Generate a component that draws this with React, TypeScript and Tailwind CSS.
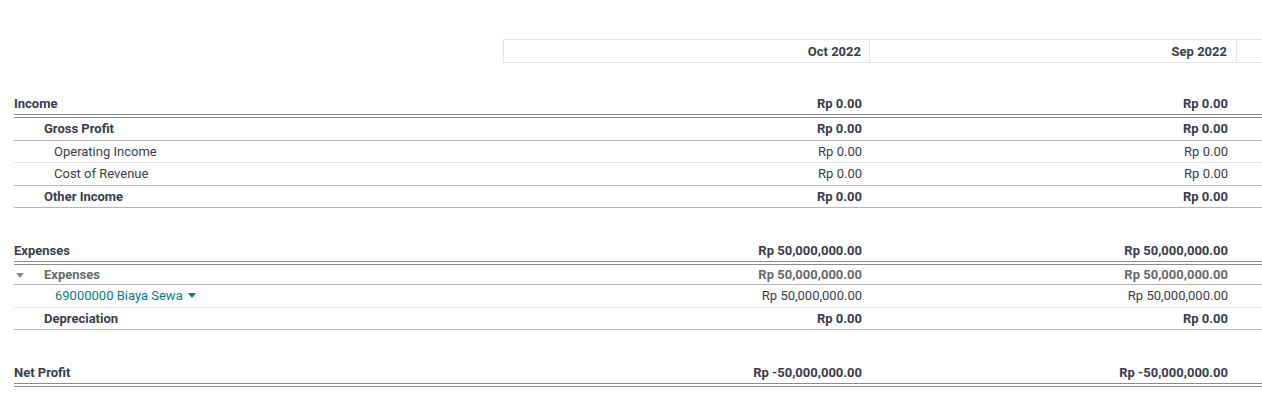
import React from "react";

type Row = {
  label: string;
  oct: string;
  sep: string;
  level: 0 | 1 | 2;
  bold?: boolean;
  muted?: boolean;
  link?: boolean;
  caret?: boolean;
  line: "double" | "dark" | "light";
};

const sections: Row[][] = [
  [
    { label: "Income", oct: "Rp 0.00", sep: "Rp 0.00", level: 0, bold: true, line: "double" },
    { label: "Gross Profit", oct: "Rp 0.00", sep: "Rp 0.00", level: 1, bold: true, line: "dark" },
    { label: "Operating Income", oct: "Rp 0.00", sep: "Rp 0.00", level: 2, line: "light" },
    { label: "Cost of Revenue", oct: "Rp 0.00", sep: "Rp 0.00", level: 2, line: "dark" },
    { label: "Other Income", oct: "Rp 0.00", sep: "Rp 0.00", level: 1, bold: true, line: "dark" },
  ],
  [
    { label: "Expenses", oct: "Rp 50,000,000.00", sep: "Rp 50,000,000.00", level: 0, bold: true, line: "double" },
    { label: "Expenses", oct: "Rp 50,000,000.00", sep: "Rp 50,000,000.00", level: 1, bold: true, muted: true, caret: true, line: "dark" },
    { label: "69000000 Biaya Sewa", oct: "Rp 50,000,000.00", sep: "Rp 50,000,000.00", level: 2, link: true, line: "light" },
    { label: "Depreciation", oct: "Rp 0.00", sep: "Rp 0.00", level: 1, bold: true, line: "dark" },
  ],
  [
    { label: "Net Profit", oct: "Rp -50,000,000.00", sep: "Rp -50,000,000.00", level: 0, bold: true, line: "double" },
  ],
];

const Caret = ({ className }: { className?: string }) => (
  <svg width="8" height="5" viewBox="0 0 8 5" className={className}>
    <path d="M0 0h8L4 5z" fill="currentColor" />
  </svg>
);

const ReportRow = ({ row }: { row: Row }) => {
  const lineCls =
    row.line === "double"
      ? "h-[26px] border-b-4 border-double border-[#8c8c8c]"
      : row.line === "dark"
      ? "border-b border-[#b5b5b5]"
      : "border-b border-[#e6e6e6]";
  const height = row.line === "double" ? "" : row.caret ? "h-[20px]" : "h-[22.5px]";
  const pad = row.level === 0 ? "pl-0" : row.level === 1 ? "pl-[30px]" : "pl-[40px]";
  const weight = row.bold ? "font-bold" : "font-normal";
  const color = row.muted ? "text-[#6a6a6a]" : "text-[#3a3d4a]";
  return (
    <div className={`grid grid-cols-[489px_367px_367px_25px] items-center ${lineCls} ${height} ${weight} ${color}`}>
      <div className={`relative flex items-center ${pad}`}>
        {row.caret && <Caret className="absolute left-[2px] top-[5px] text-[#8a8a8a]" />}
        {row.link ? (
          <span className="flex items-center gap-[5px] text-[#017e84] pl-px">
            {row.label}
            <Caret />
          </span>
        ) : (
          <span>{row.label}</span>
        )}
      </div>
      <div className="text-right pr-2">{row.oct}</div>
      <div className="text-right pr-[9px]">{row.sep}</div>
      <div />
    </div>
  );
};

export default function App() {
  return (
    <div className="bg-white w-[1262px] h-[413px] pl-[14px] pt-[39px] text-[13px] leading-none font-['Roboto',sans-serif] text-[#3a3d4a]">
      <div className="grid grid-cols-[489px_367px_367px_25px] h-[24px] font-bold">
        <div />
        <div className="flex items-center justify-end pr-2 border border-[#e2e4e8]">Oct 2022</div>
        <div className="flex items-center justify-end pr-[9px] border-y border-r border-[#e2e4e8]">Sep 2022</div>
        <div className="border-y border-[#e2e4e8]" />
      </div>
      <div className="flex flex-col gap-[31px] pt-[29px]">
        {sections.map((rows, i) => (
          <div key={i} className="flex flex-col">
            {rows.map((r, j) => (
              <ReportRow key={j} row={r} />
            ))}
          </div>
        ))}
      </div>
    </div>
  );
}
